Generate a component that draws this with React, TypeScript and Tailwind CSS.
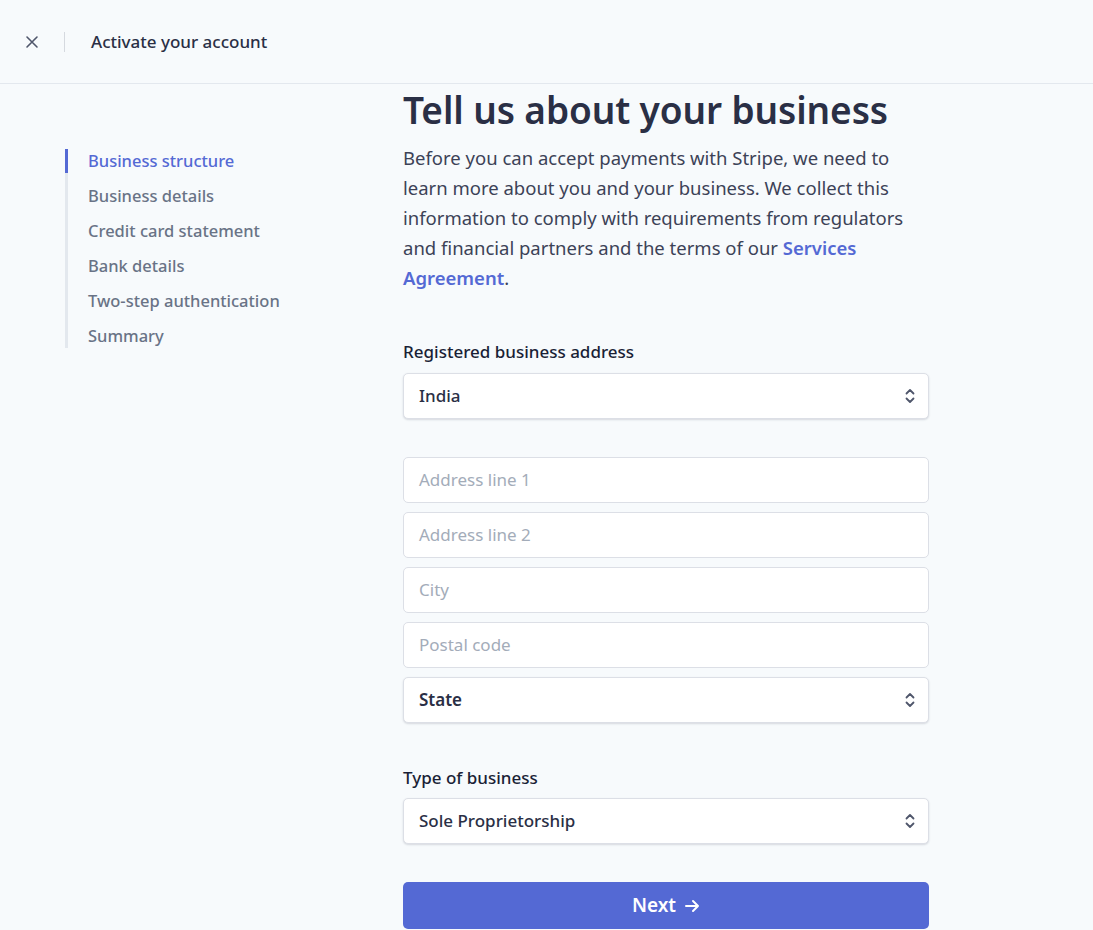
import React from "react";

const Chevrons = () => (
  <svg width="12" height="18" viewBox="0 0 12 18" fill="none" stroke="#4f566b" strokeWidth="1.8" strokeLinecap="round" strokeLinejoin="round">
    <path d="M2.5 6.5 L6 3 L9.5 6.5" />
    <path d="M2.5 11.5 L6 15 L9.5 11.5" />
  </svg>
);

const SelectBox = ({ value, bold }: { value: string; bold?: boolean }) => (
  <div className="flex h-[46px] items-center justify-between rounded-[5px] border border-[#dcdfe6] bg-white pl-[15px] pr-[12px] shadow-[0_1px_2px_rgba(60,66,87,0.18)]">
    <span className={`text-[17px] text-[#2a2f45] ${bold ? "font-semibold" : "font-medium"}`}>{value}</span>
    <Chevrons />
  </div>
);

const InputBox = ({ placeholder }: { placeholder: string }) => (
  <div className="flex h-[46px] items-center rounded-[5px] border border-[#dcdfe6] bg-white pl-[15px]">
    <span className="text-[17px] text-[#a3acb9]">{placeholder}</span>
  </div>
);

export default function App() {
  const steps = [
    "Business structure",
    "Business details",
    "Credit card statement",
    "Bank details",
    "Two-step authentication",
    "Summary",
  ];
  return (
    <div className="min-h-[930px] bg-[#f7fafc]" style={{ fontFamily: '"Noto Sans", "Open Sans", sans-serif' }}>
      <header className="flex h-[84px] items-center border-b border-[#e3e8ee] pl-[24px]">
        <svg width="16" height="16" viewBox="0 0 16 16" stroke="#4f566b" strokeWidth="1.6" strokeLinecap="round">
          <path d="M3 3 L13 13 M13 3 L3 13" />
        </svg>
        <div className="ml-[24px] h-[20px] w-px bg-[#d5d9df]" />
        <span className="ml-[26px] text-[17px] font-medium text-[#2a2f45]">Activate your account</span>
      </header>
      <div className="flex">
        <nav className="ml-[65px] mt-[65px] w-[338px] self-start">
          <ul className="flex flex-col gap-[11px] border-l-[3px] border-[#e3e8ee]">
            {steps.map((s, i) => (
              <li
                key={s}
                className={`-ml-[3px] flex h-[24px] items-center border-l-[3px] pl-[20px] text-[16.5px] font-medium ${
                  i === 0 ? "border-[#5469d4] text-[#5469d4]" : "border-transparent text-[#697386]"
                }`}
              >
                {s}
              </li>
            ))}
          </ul>
        </nav>
        <main className="w-[526px] pt-[1px]">
          <h1 className="text-[37px] font-semibold leading-[50px] tracking-[-0.1px] text-[#2a2f45]">
            Tell us about your business
          </h1>
          <p className="mt-[8px] text-[18.5px] leading-[30px] text-[#3c4257]">
            Before you can accept payments with Stripe, we need to learn more about you and your business. We collect this
            information to comply with requirements from regulators and financial partners and the terms of our{" "}
            <span className="font-semibold text-[#5469d4]">Services Agreement</span>.
          </p>
          <div className="mt-[46px] text-[17px] font-medium text-[#1a1f36]">Registered business address</div>
          <div className="mt-[8px]">
            <SelectBox value="India" />
          </div>
          <div className="mt-[38px] flex flex-col gap-[9px]">
            <InputBox placeholder="Address line 1" />
            <InputBox placeholder="Address line 2" />
            <InputBox placeholder="City" />
            <InputBox placeholder="Postal code" />
            <SelectBox value="State" bold />
          </div>
          <div className="mt-[42px] text-[17px] font-medium text-[#1a1f36]">Type of business</div>
          <div className="mt-[8px]">
            <SelectBox value="Sole Proprietorship" />
          </div>
          <button className="mt-[38px] flex h-[47px] w-full items-center justify-center gap-[8px] rounded-[5px] bg-[#5469d4] text-[19px] font-semibold text-white">
            Next
            <svg width="16" height="16" viewBox="0 0 16 16" fill="none" stroke="white" strokeWidth="2" strokeLinecap="round" strokeLinejoin="round">
              <path d="M2 8 H14 M9 3 L14 8 L9 13" />
            </svg>
          </button>
        </main>
      </div>
    </div>
  );
}
